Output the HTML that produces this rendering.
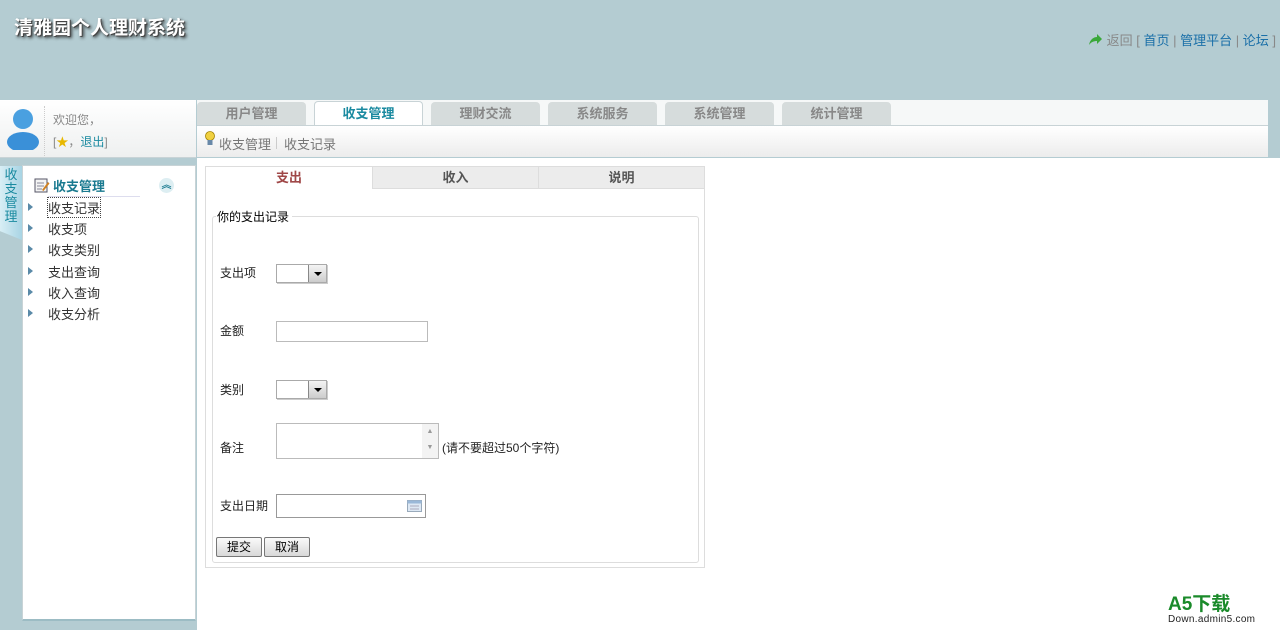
<!DOCTYPE html>
<html><head><meta charset="utf-8">
<style>
*{margin:0;padding:0;box-sizing:border-box}
body{width:1280px;height:630px;overflow:hidden;background:#fff;font-family:"Liberation Sans","Noto Sans CJK SC",sans-serif;font-size:12px;color:#333;position:relative}
.abs{position:absolute}
#hdr{left:0;top:0;width:1280px;height:158px;background:#b4ccd2}
#title{left:14px;top:13px;font-size:19px;font-weight:bold;color:#fff;letter-spacing:0px;text-shadow:1px 1px 0 #444,2px 2px 3px #222}
#toplinks{left:1088px;top:30px;color:#888;font-size:13px}
#toplinks a{color:#1a6fa8;text-decoration:none}
#user{left:0;top:100px;width:196px;height:58px;background:linear-gradient(#fff,#eef0f0);border-bottom:1px solid #c8d3d6}
#navbar{left:197px;top:100px;width:1071px;height:25px;background:#f6f8f8}
.tab{top:102px;width:109px;height:23px;background:#d6dcdc;border-radius:4px 4px 0 0;text-align:center;line-height:23px;font-weight:bold;color:#888;font-size:13px}
.tab.on{background:#fff;color:#1a8aa0;height:26px;border:1px solid #c8d3d6;border-bottom:none;top:101px}
#sub{left:197px;top:125px;width:1071px;height:33px;background:linear-gradient(#fff,#ececec);border-top:1px solid #c8d3d6;border-bottom:1px solid #b4ccd2}
#sub span{position:absolute;top:8px;color:#777;font-size:13px}
#side{left:0;top:158px;width:197px;height:472px;background:#b4ccd2}
#vt{left:0;top:166px;width:22px;height:74px;background:linear-gradient(90deg,#d8eef5,#a8d4e4);color:#1a8aa0;font-size:13px;line-height:14px;text-align:center;padding-top:2px;clip-path:polygon(0 0,100% 0,100% 100%,0 88%)}
#menu{left:22px;top:165px;width:174px;height:456px;background:#fff;border:1px solid #c8d3d6;border-bottom:2px solid #9cbcc4}
.mi{position:absolute;left:48px;font-size:13px;color:#333}
.arr{position:absolute;left:28px;width:0;height:0;border-top:4px solid transparent;border-bottom:4px solid transparent;border-left:5px solid #5a8aa8}
#panel{left:205px;top:166px;width:500px;height:402px;border:1px solid #ddd;background:#fff}
.ct{top:167px;height:22px;width:166px;background:#ececec;text-align:center;line-height:22px;font-weight:bold;font-size:13px;color:#555;border-bottom:1px solid #ddd;border-left:1px solid #ddd}
#fs{left:212px;top:216px;width:487px;height:347px;border:1px solid #ddd;border-radius:3px}
#leg{left:216px;top:208px;background:#fff;padding:0 3px 0 1px;font-size:12px;color:#000}
.lb{position:absolute;left:220px;font-size:12px;color:#222}
.sel{position:absolute;left:276px;width:51px;height:19px;border:1px solid #aaa;background:#fff;box-shadow:1px 1px 0 #ccc}
.sel i{position:absolute;right:0;top:0;width:18px;height:17px;background:linear-gradient(#f4f4f4,#ccc);border-left:1px solid #888}
.sel i:after{content:"";position:absolute;left:5px;top:7px;border-left:4px solid transparent;border-right:4px solid transparent;border-top:4px solid #000}
.inp{position:absolute;left:276px;border:1px solid #bbb;background:#fff}
.btn{position:absolute;top:537px;height:20px;border:1px solid #777;border-radius:2px;background:linear-gradient(#fafafa,#d8d8d8);font-size:12px;text-align:center;line-height:18px;color:#000}
</style></head><body>
<div id="hdr" class="abs"></div>
<div id="title" class="abs">清雅园个人理财系统</div>
<div id="toplinks" class="abs"><svg width="15" height="13" style="vertical-align:-1px"><path d="M1 12 C2 6 6 4 9 4 V1 L14 6 L9 11 V8 C6 8 3 9 1 12Z" fill="#3aa83a"/></svg> 返回 [ <a>首页</a> | <a>管理平台</a> | <a>论坛</a> ]</div>

<div id="user" class="abs">
 <div class="abs" style="left:44px;top:6px;width:1px;height:50px;border-left:1px dotted #ccc"></div>
 <div class="abs" style="left:53px;top:11px;color:#888;font-size:12px">欢迎您，</div>
 <div class="abs" style="left:53px;top:33px;color:#888;font-size:12px">[<span style="color:#e8b800">★</span>，<span style="color:#1a8aa0">退出</span>]</div>
</div>
<svg class="abs" style="left:6px;top:106px" width="34" height="44"><circle cx="17" cy="13" r="10" fill="#4aa0e0"/><ellipse cx="17" cy="36" rx="16" ry="10" fill="#3a90d8"/></svg>
<div id="navbar" class="abs"></div>
<div class="tab abs" style="left:197px">用户管理</div>
<div class="tab on abs" style="left:314px">收支管理</div>
<div class="tab abs" style="left:431px">理财交流</div>
<div class="tab abs" style="left:548px">系统服务</div>
<div class="tab abs" style="left:665px">系统管理</div>
<div class="tab abs" style="left:782px">统计管理</div>
<div id="sub" class="abs"><svg style="position:absolute;left:8px;top:5px" width="10" height="17"><circle cx="5" cy="5" r="4.5" fill="#f0d040" stroke="#a08000" stroke-width=".8"/><rect x="2.5" y="9" width="5" height="5" fill="#6888a8"/></svg><span style="left:22px">收支管理</span><span style="left:79px;top:11px;width:1px;height:12px;background:#ccc"></span><span style="left:87px">收支记录</span></div>
<div class="abs" style="left:1268px;top:100px;width:12px;height:58px;background:#b4ccd2"></div>

<div id="side" class="abs"></div>
<div id="vt" class="abs">收<br>支<br>管<br>理</div>
<div id="menu" class="abs"></div>
<svg class="abs" style="left:34px;top:177px" width="16" height="16"><rect x="1" y="2" width="12" height="13" fill="#f4f4f4" stroke="#556"/><path d="M3 6h7M3 9h7M3 12h5" stroke="#889"/><path d="M8 13 L14 5 L15.5 6.5 L9.5 14Z" fill="#d08020"/></svg>
<div class="abs" style="left:53px;top:176px;font-weight:bold;color:#1a7a90;font-size:13px">收支管理</div>
<div class="abs" style="left:159px;top:178px;width:15px;height:15px;border-radius:50%;background:#ddeef2;color:#1a7a90;font-size:10px;text-align:center;line-height:15px;font-weight:bold">︽</div>
<div class="abs" style="left:48px;top:196px;width:92px;border-top:1px solid #dde"></div>
<div class="arr" style="top:203px"></div><div class="mi" style="top:198px;outline:1px dotted #444">收支记录</div>
<div class="arr" style="top:224px"></div><div class="mi" style="top:219px">收支项</div>
<div class="arr" style="top:245px"></div><div class="mi" style="top:240px">收支类别</div>
<div class="arr" style="top:267px"></div><div class="mi" style="top:262px">支出查询</div>
<div class="arr" style="top:288px"></div><div class="mi" style="top:283px">收入查询</div>
<div class="arr" style="top:309px"></div><div class="mi" style="top:304px">收支分析</div>

<div id="panel" class="abs"></div>
<div class="abs" style="left:206px;top:167px;width:166px;height:22px;text-align:center;line-height:22px;font-weight:bold;color:#a04848;font-size:13px">支出</div>
<div class="ct abs" style="left:372px">收入</div>
<div class="ct abs" style="left:538px">说明</div>
<div id="fs" class="abs"></div>
<div id="leg" class="abs">你的支出记录</div>
<div class="lb" style="top:264px">支出项</div><div class="sel" style="top:264px"><i></i></div>
<div class="lb" style="top:322px">金额</div><div class="inp" style="top:321px;width:152px;height:21px"></div>
<div class="lb" style="top:381px">类别</div><div class="sel" style="top:380px"><i></i></div>
<div class="lb" style="top:439px">备注</div><div class="inp" style="top:423px;width:163px;height:36px"><div style="position:absolute;right:0;top:0;width:16px;height:34px;background:#f3f3f3;color:#999;font-size:7px;text-align:center;line-height:16px">▲<br>▼</div></div>
<div class="abs" style="left:442px;top:439px;font-size:12px;color:#222">(请不要超过50个字符)</div>
<div class="lb" style="top:497px">支出日期</div><div class="inp" style="top:494px;width:150px;height:24px;border-color:#999"><svg style="position:absolute;right:3px;top:5px" width="15" height="12"><rect x=".5" y=".5" width="14" height="11" fill="#dde8f4" stroke="#9ab"/><rect x=".5" y=".5" width="14" height="3" fill="#9ab8d8"/><path d="M3 6h9M3 9h9" stroke="#aab"/></svg></div>
<div class="btn" style="left:216px;width:46px">提交</div>
<div class="btn" style="left:264px;width:46px">取消</div>

<div class="abs" style="left:1168px;top:595px;font-size:19px;font-weight:bold;color:#1a8a2a;line-height:20px">A5下载</div>
<div class="abs" style="left:1168px;top:614px;font-size:10px;color:#222;letter-spacing:.3px">Down.admin5.com</div>
</body></html>
